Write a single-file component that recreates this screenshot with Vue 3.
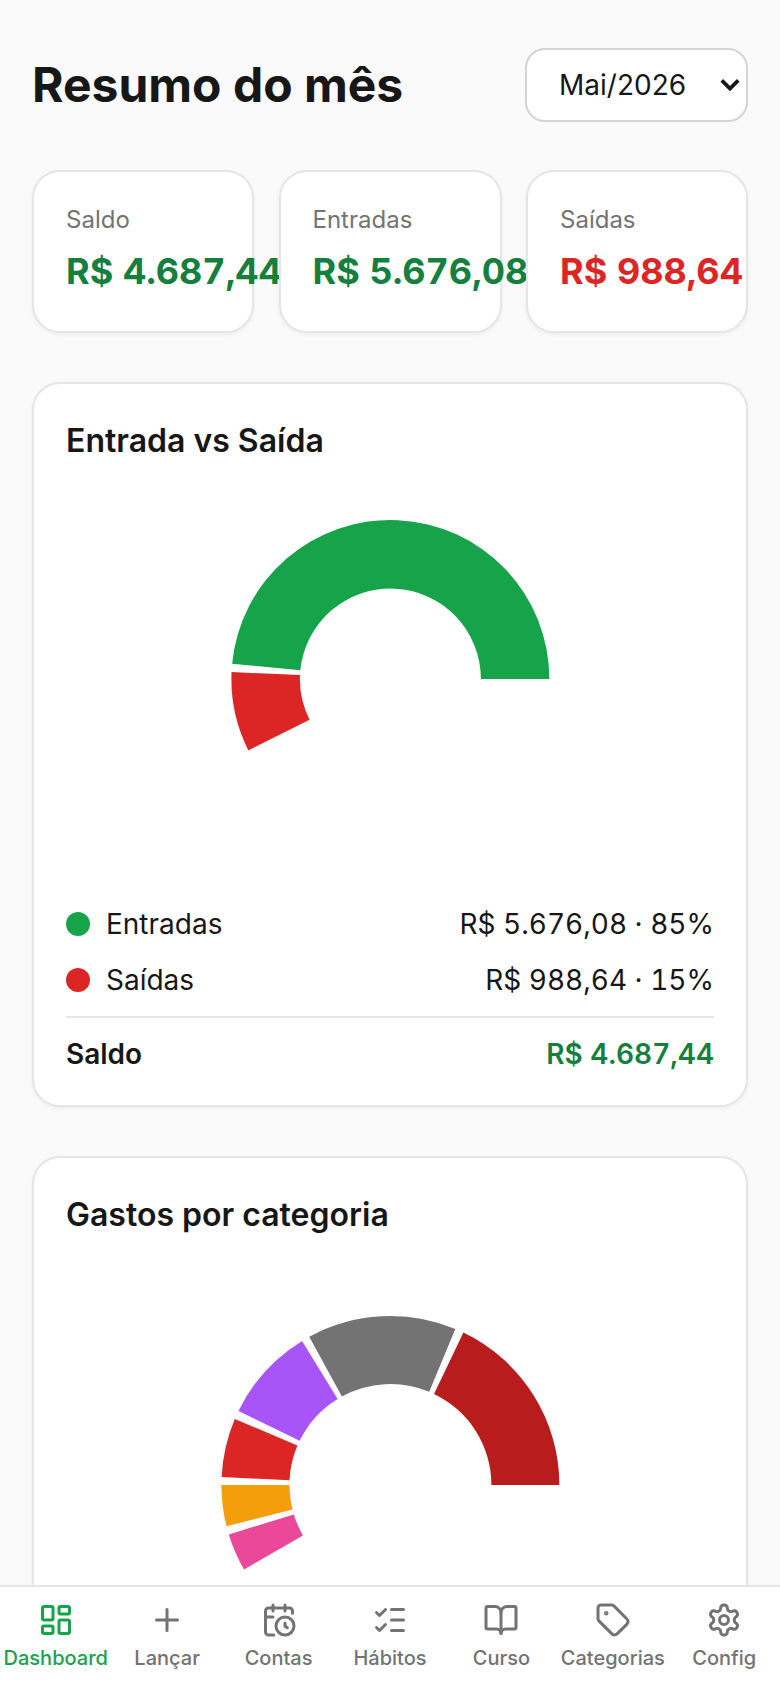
<script setup>
const cards = [
  { label: 'Saldo', value: 'R$ 4.687,44', tone: 'pos' },
  { label: 'Entradas', value: 'R$ 5.676,08', tone: 'pos' },
  { label: 'Saídas', value: 'R$ 988,64', tone: 'neg' },
]

function sector(cx, cy, r0, r1, a0, a1) {
  const p = (r, a) => {
    const t = (a * Math.PI) / 180
    return `${(cx + r * Math.cos(t)).toFixed(2)} ${(cy - r * Math.sin(t)).toFixed(2)}`
  }
  const large = a1 - a0 > 180 ? 1 : 0
  return `M${p(r1, a0)}A${r1} ${r1} 0 ${large} 0 ${p(r1, a1)}L${p(r0, a1)}A${r0} ${r0} 0 ${large} 1 ${p(r0, a0)}Z`
}

const flow = [
  { color: '#16a34a', d: sector(324.4, 214, 90.5, 159, 0, 174.5) },
  { color: '#dc2626', d: sector(324.4, 214, 90.5, 159, 177.5, 206.7) },
]
const cats = [
  { color: '#b91c1c', a: 0, b: 64.4 },
  { color: '#737373', a: 67.4, b: 118.7 },
  { color: '#a855f7', a: 121.5, b: 154 },
  { color: '#dc2626', a: 157, b: 177.3 },
  { color: '#f59e0b', a: 180, b: 194.1 },
  { color: '#ec4899', a: 197, b: 210 },
].map((s) => ({ color: s.color, d: sector(324.4, 246, 101, 169, s.a, s.b) }))

const nav = [
  { label: 'Dashboard', icon: 'dash', active: true },
  { label: 'Lançar', icon: 'plus' },
  { label: 'Contas', icon: 'cal' },
  { label: 'Hábitos', icon: 'list' },
  { label: 'Curso', icon: 'book' },
  { label: 'Categorias', icon: 'tag' },
  { label: 'Config', icon: 'cog' },
]
</script>

<template>
  <div class="page">
    <main class="content">
      <header class="head">
        <h1>Resumo do mês</h1>
        <div class="select-wrap">
          <select class="month">
            <option>Mai/2026</option>
          </select>
          <svg class="chev" viewBox="0 0 24 24" fill="none" stroke="currentColor" stroke-width="4"><path d="m3 7 9 9 9-9" /></svg>
        </div>
      </header>

      <section class="summary">
        <div v-for="c in cards" :key="c.label" class="card mini">
          <div class="mini-label">{{ c.label }}</div>
          <div class="mini-value" :class="c.tone">{{ c.value }}</div>
        </div>
      </section>

      <section class="card panel">
        <h2>Entrada vs Saída</h2>
        <svg class="chart chart-flow" viewBox="0 0 648 431">
          <path v-for="s in flow" :key="s.color" :d="s.d" :fill="s.color" />
        </svg>
        <div class="legend">
          <div class="row">
            <span class="key"><i class="dot green"></i>Entradas</span>
            <span class="num">R$ 5.676,08 · 85%</span>
          </div>
          <div class="row">
            <span class="key"><i class="dot red"></i>Saídas</span>
            <span class="num">R$ 988,64 · 15%</span>
          </div>
          <div class="row total">
            <span>Saldo</span>
            <span class="num pos">R$ 4.687,44</span>
          </div>
        </div>
      </section>

      <section class="card panel">
        <h2>Gastos por categoria</h2>
        <svg class="chart chart-cat" viewBox="0 0 648 440">
          <path v-for="s in cats" :key="s.color" :d="s.d" :fill="s.color" />
        </svg>
      </section>
    </main>

    <nav class="nav">
      <div v-for="n in nav" :key="n.label" class="nav-item" :class="{ active: n.active }">
        <svg viewBox="0 0 24 24" fill="none" stroke="currentColor" stroke-width="2" stroke-linecap="round" stroke-linejoin="round">
          <template v-if="n.icon === 'dash'">
            <rect x="3" y="3" width="7" height="9" rx="1" /><rect x="14" y="3" width="7" height="5" rx="1" /><rect x="14" y="12" width="7" height="9" rx="1" /><rect x="3" y="16" width="7" height="5" rx="1" />
          </template>
          <template v-else-if="n.icon === 'plus'">
            <path d="M5 12h14" /><path d="M12 5v14" />
          </template>
          <template v-else-if="n.icon === 'cal'">
            <path d="M16 14v2.2l1.6 1" /><path d="M16 2v4" /><path d="M21 7.5V6a2 2 0 0 0-2-2H5a2 2 0 0 0-2 2v14a2 2 0 0 0 2 2h3.5" /><path d="M3 10h5" /><path d="M8 2v4" /><circle cx="16" cy="16" r="6" />
          </template>
          <template v-else-if="n.icon === 'list'">
            <path d="M13 5h8" /><path d="M13 12h8" /><path d="M13 19h8" /><path d="m3 17 2 2 4-4" /><path d="m3 7 2 2 4-4" />
          </template>
          <template v-else-if="n.icon === 'book'">
            <path d="M12 7v14" /><path d="M3 18a1 1 0 0 1-1-1V4a1 1 0 0 1 1-1h5a4 4 0 0 1 4 4 4 4 0 0 1 4-4h5a1 1 0 0 1 1 1v13a1 1 0 0 1-1 1h-6a3 3 0 0 0-3 3 3 3 0 0 0-3-3z" />
          </template>
          <template v-else-if="n.icon === 'tag'">
            <path d="M12.586 2.586A2 2 0 0 0 11.172 2H4a2 2 0 0 0-2 2v7.172a2 2 0 0 0 .586 1.414l8.704 8.704a2.426 2.426 0 0 0 3.42 0l6.58-6.58a2.426 2.426 0 0 0 0-3.42z" /><circle cx="7.5" cy="7.5" r=".5" fill="currentColor" />
          </template>
          <template v-else>
            <path d="M12.22 2h-.44a2 2 0 0 0-2 2v.18a2 2 0 0 1-1 1.73l-.43.25a2 2 0 0 1-2 0l-.15-.08a2 2 0 0 0-2.73.73l-.22.38a2 2 0 0 0 .73 2.73l.15.1a2 2 0 0 1 1 1.72v.51a2 2 0 0 1-1 1.74l-.15.09a2 2 0 0 0-.73 2.73l.22.38a2 2 0 0 0 2.73.73l.15-.08a2 2 0 0 1 2 0l.43.25a2 2 0 0 1 1 1.73V20a2 2 0 0 0 2 2h.44a2 2 0 0 0 2-2v-.18a2 2 0 0 1 1-1.73l.43-.25a2 2 0 0 1 2 0l.15.08a2 2 0 0 0 2.73-.73l.22-.39a2 2 0 0 0-.73-2.73l-.15-.08a2 2 0 0 1-1-1.74v-.5a2 2 0 0 1 1-1.74l.15-.09a2 2 0 0 0 .73-2.73l-.22-.38a2 2 0 0 0-2.73-.73l-.15.08a2 2 0 0 1-2 0l-.43-.25a2 2 0 0 1-1-1.73V4a2 2 0 0 0-2-2z" /><circle cx="12" cy="12" r="3" />
          </template>
        </svg>
        <span>{{ n.label }}</span>
      </div>
    </nav>
  </div>
</template>

<style>
html, body { margin: 0; background: #fafafa; }
</style>

<style scoped>
.page {
  width: 780px;
  height: 1688px;
  overflow: hidden;
  position: relative;
  background: #fafafa;
  font-family: Inter, "Noto Sans", sans-serif;
  color: #171717;
}
.content {
  padding: 48px 32px 0;
  display: flex;
  flex-direction: column;
}
.head {
  height: 74px;
  display: flex;
  align-items: center;
  justify-content: space-between;
}
h1 {
  margin: 0;
  font-size: 48px;
  line-height: 60px;
  font-weight: 700;
}
.select-wrap {
  position: relative;
  width: 223px;
  height: 74px;
}
.month {
  appearance: none;
  width: 100%;
  height: 100%;
  border: 2px solid #d4d4d4;
  border-radius: 20px;
  background: #fff;
  padding: 0 32px;
  font: 400 28px Inter, sans-serif;
  color: #171717;
}
.chev {
  position: absolute;
  right: 7px;
  top: 26px;
  width: 22px;
  height: 22px;
  color: #171717;
  pointer-events: none;
}
.summary {
  margin-top: 48px;
  display: grid;
  grid-template-columns: 222fr 223fr 222fr;
  column-gap: 24.5px;
}
.card {
  background: #fff;
  border: 2px solid #e5e5e5;
  border-radius: 28px;
  box-shadow: 0 2px 4px rgba(0, 0, 0, 0.05);
  box-sizing: border-box;
}
.mini {
  height: 163px;
  padding: 32px;
  min-width: 0;
}
.mini-label {
  font-size: 24px;
  line-height: 32px;
  color: #737373;
}
.mini-value {
  margin-top: 8px;
  font-size: 36px;
  line-height: 54px;
  font-weight: 700;
  white-space: nowrap;
  font-variant-numeric: tabular-nums;
}
.pos { color: #15803d; }
.neg { color: #dc2626; }
.panel {
  margin-top: 49px;
  padding: 33px 32px 32px;
}
h2 {
  margin: 0;
  font-size: 32px;
  line-height: 48px;
  font-weight: 600;
}
.chart {
  display: block;
  width: 648px;
}
.chart-flow { height: 431px; }
.chart-cat { height: 440px; }
.legend {
  display: flex;
  flex-direction: column;
}
.row {
  display: flex;
  align-items: center;
  justify-content: space-between;
  height: 56px;
  font-size: 28px;
}
.num {
  font-variant-numeric: tabular-nums;
  font-weight: 400;
}
.key {
  display: flex;
  align-items: center;
  gap: 16px;
}
.dot {
  width: 24px;
  height: 24px;
  border-radius: 50%;
}
.green { background: #16a34a; }
.red { background: #dc2626; }
.total {
  margin-top: 8px;
  border-top: 2px solid #e5e5e5;
  padding-top: 16px;
  height: 57px;
  box-sizing: border-box;
  font-weight: 600;
}
.total .num { font-weight: 600; }
.nav {
  position: absolute;
  left: 0;
  right: 0;
  bottom: 0;
  height: 103px;
  box-sizing: border-box;
  background: #fff;
  border-top: 2px solid #e5e5e5;
  display: grid;
  grid-template-columns: repeat(7, 1fr);
}
.nav-item {
  display: flex;
  flex-direction: column;
  align-items: center;
  padding-top: 15px;
  color: #737373;
  font-size: 20px;
  font-weight: 500;
  line-height: 30px;
  white-space: nowrap;
}
.nav-item svg {
  width: 36px;
  height: 36px;
  margin-bottom: 5px;
}
.nav-item.active { color: #16a34a; }
</style>
